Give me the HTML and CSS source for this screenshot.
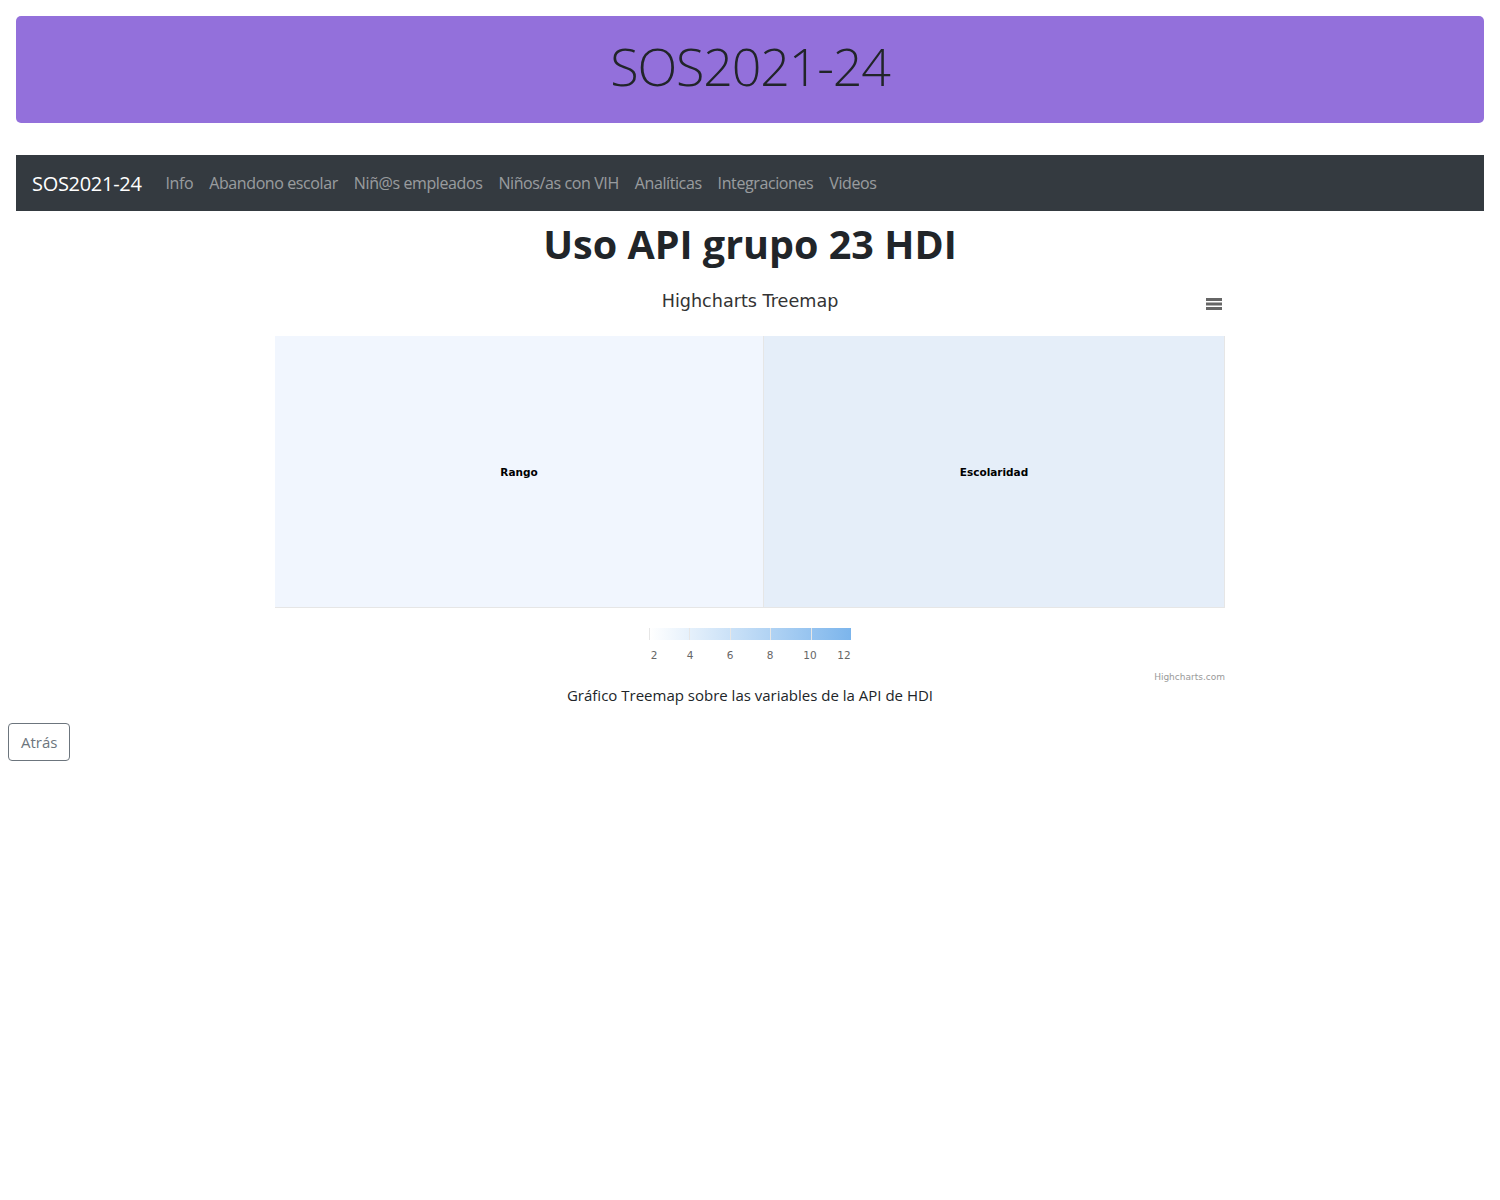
FILE: index.html
```html
<!DOCTYPE html>
<html lang="es">
<head>
<meta charset="utf-8">
<title>SOS2021-24</title>
<link rel="stylesheet" href="styles.css">
</head>
<body>
<div class="shell">
  <header class="jumbo"><h1 class="display">SOS2021-24</h1></header>
  <nav class="navbar">
    <span class="brand">SOS2021-24</span>
    <a class="nav-link">Info</a>
    <a class="nav-link">Abandono escolar</a>
    <a class="nav-link">Niñ@s empleados</a>
    <a class="nav-link">Niños/as con VIH</a>
    <a class="nav-link">Analíticas</a>
    <a class="nav-link">Integraciones</a>
    <a class="nav-link">Videos</a>
  </nav>
</div>
<main>
  <h1 class="page-title">Uso API grupo 23 HDI</h1>
  <figure class="chart">
    <div class="chart-head">
      <div class="chart-title">Highcharts Treemap</div>
      <svg class="menu" width="18" height="14" viewBox="0 0 18 14"><path d="M1 2.5h16M1 7h16M1 11.5h16" stroke="#666" stroke-width="3"/></svg>
    </div>
    <div class="treemap">
      <div class="cell cell-a"><span>Rango</span></div>
      <div class="cell cell-b"><span>Escolaridad</span></div>
    </div>
    <div class="legend">
      <div class="bar">
        <i></i><i></i><i></i><i></i><i></i>
      </div>
      <div class="ticks"><span>2</span><span>4</span><span>6</span><span>8</span><span>10</span><span>12</span></div>
    </div>
    <div class="credits">Highcharts.com</div>
  </figure>
  <p class="caption">Gráfico Treemap sobre las variables de la API de HDI</p>
  <button class="btn">Atrás</button>
</main>
</body>
</html>
```
FILE: styles.css
```css
html, body { margin: 0; padding: 0; }
body {
  margin: 8px;
  font-family: "Open Sans", "Noto Sans", sans-serif;
  color: #212529;
  background: #fff;
}
.shell { padding: 8px 8px 0; }
.jumbo {
  background: #9370db;
  border-radius: 5px;
  height: 107px;
  box-sizing: border-box;
  padding-bottom: 8px;
  display: flex;
  align-items: center;
  justify-content: center;
}
.display {
  margin: 0;
  font-weight: 300;
  font-size: 52px;
  letter-spacing: -1.2px;
  color: #212529;
  line-height: 1;
}
.navbar {
  margin-top: 32px;
  background: #343a40;
  height: 56px;
  display: flex;
  align-items: center;
  padding: 0 16px;
}
.brand {
  color: #fff;
  font-size: 20px;
  margin-right: 16px;
  letter-spacing: -0.3px;
}
.nav-link {
  color: rgba(255,255,255,.5);
  font-size: 16px;
  padding: 0 8px;
  letter-spacing: -0.4px;
}
main { display: flex; flex-direction: column; align-items: center; }
.page-title {
  margin: 9px 0 17px;
  font-size: 39.5px;
  font-weight: 700;
  line-height: 48px;
}
.chart {
  margin: 0;
  width: 950px;
  height: 398px;
  display: flex;
  flex-direction: column;
  font-family: "DejaVu Sans", Verdana, sans-serif;
}
.chart-head { height: 51px; position: relative; }
.chart-title {
  text-align: center;
  font-size: 17.6px;
  color: #333;
  padding-top: 5px;
  line-height: 22px;
}
.menu { position: absolute; right: 2px; top: 12px; }
.treemap {
  height: 272px;
  display: flex;
  border-right: 1px solid #e6e6e6;
  border-bottom: 1px solid #e6e6e6;
  box-sizing: border-box;
}
.cell {
  display: flex;
  align-items: center;
  justify-content: center;
  font-size: 10.5px;
  font-weight: 700;
  color: #000;
}
.cell-a { width: 488px; background: #f1f6fe; border-right: 1px solid #e6e6e6; }
.cell-b { flex: 1; background: #e5eef9; }
.legend { display: flex; flex-direction: column; align-items: center; padding-top: 20px; }
.bar {
  width: 201px; height: 12px;
  background: linear-gradient(to right, #ffffff, #7cb5ec);
  display: flex;
  border-left: 1px solid #e6e6e6;
}
.bar i { flex: 1; border-right: 1px solid #e6e6e6; }
.bar i:last-child { border-right: none; }
.ticks {
  width: 240px;
  display: grid;
  grid-template-columns: repeat(6, 40px);
  text-align: center;
  font-size: 10.5px;
  color: #666;
  margin-top: 9px;
}
.ticks span:first-child { padding-left: 8px; }
.ticks span:last-child { padding-right: 12px; }
.credits {
  text-align: right;
  font-size: 9px;
  color: #999;
  margin-top: 11px;
}
.caption {
  margin: 0 0 16px;
  font-size: 15px;
  line-height: 24px;
  color: #212529;
}
.btn {
  align-self: flex-start;
  font-family: inherit;
  font-size: 15px;
  color: #6c757d;
  background: #fff;
  border: 1px solid #6c757d;
  border-radius: 4px;
  height: 38px;
  padding: 0 12px;
}
```
